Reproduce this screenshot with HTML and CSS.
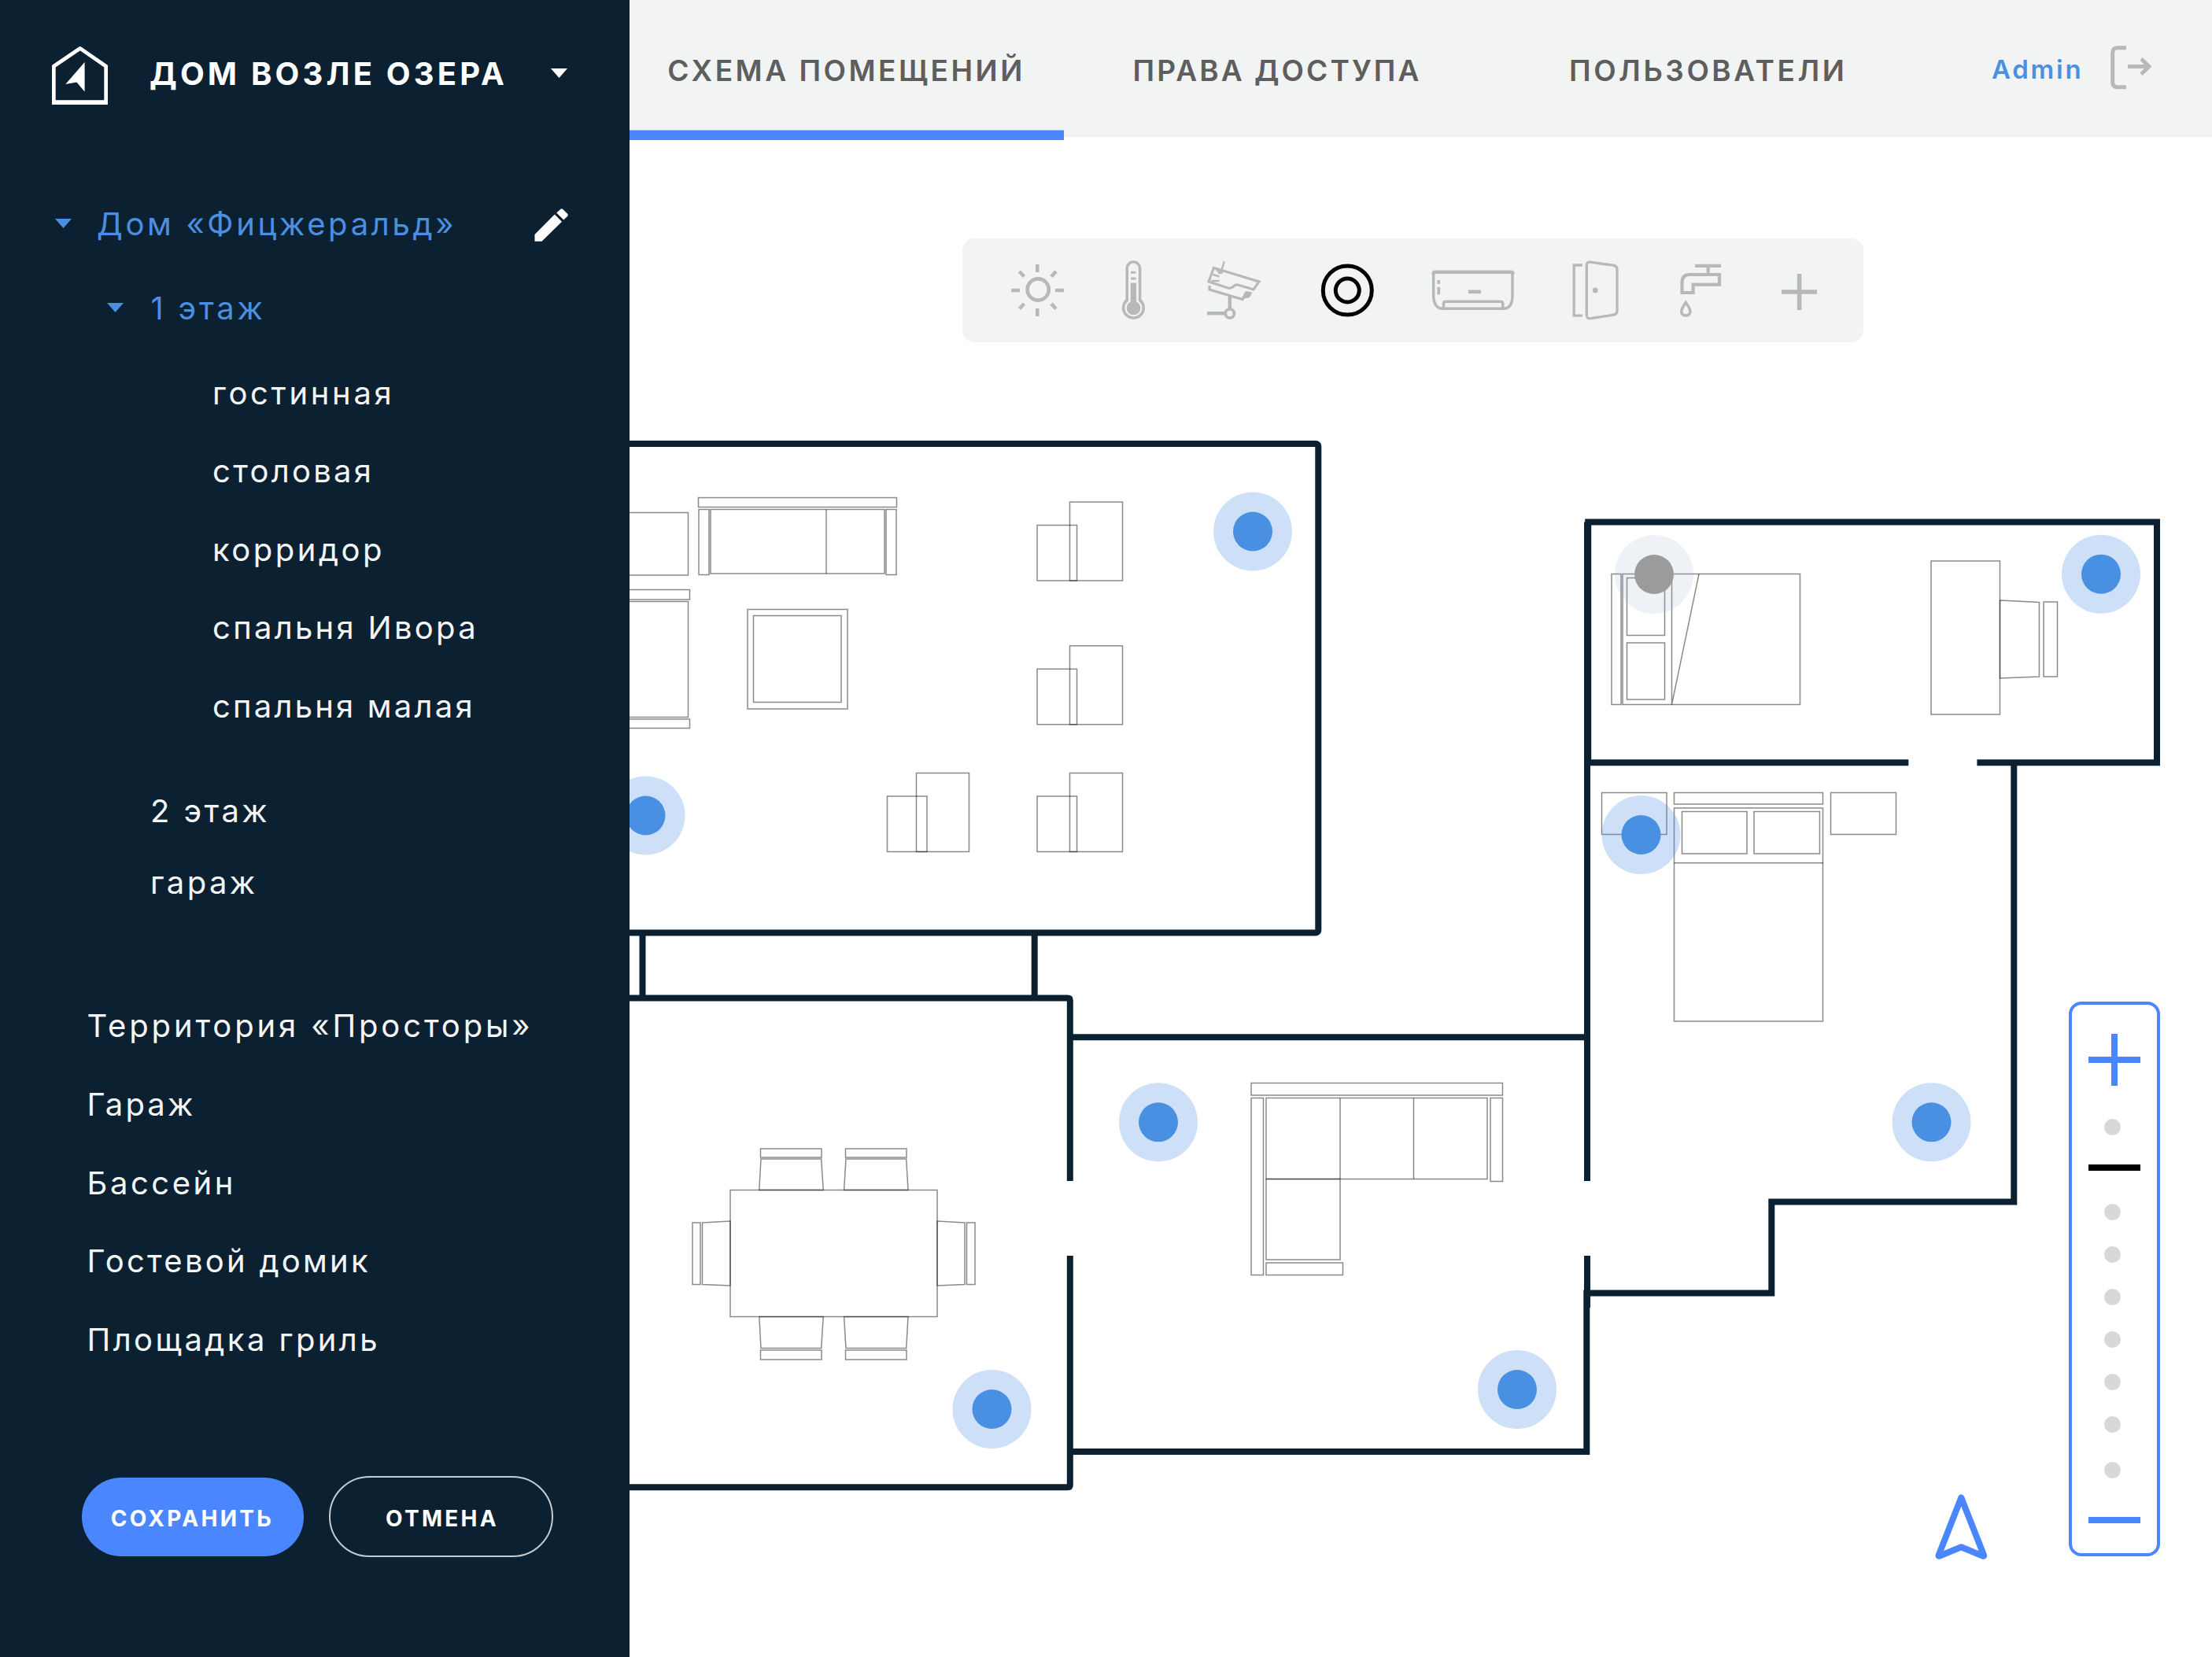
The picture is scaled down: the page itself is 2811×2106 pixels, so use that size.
FILE: index.html
```html
<!DOCTYPE html>
<html lang="ru">
<head>
<meta charset="utf-8">
<title>Дом возле озера</title>
<link rel="stylesheet" href="styles.css">
</head>
<body>
<div class="app">
  <aside class="sidebar">
    <div class="brand">
      <svg class="brand-logo" viewBox="66 0 71 186">
        <path d="M68.3 84.2 101.7 61.4 134.7 84.2V130H68.3Z" fill="none" stroke="#fff" stroke-width="4.8" stroke-linejoin="round"/>
        <path d="M66 127.5H137V133H66Z" fill="#fff"/>
        <path d="M107.6 79V116.5L97.4 104.5 83.3 107Z" fill="#fff"/>
      </svg>
      <span class="brand-name">ДОМ ВОЗЛЕ ОЗЕРА</span>
      <svg class="caret" viewBox="0 0 21 12"><path d="M0 0H21L10.5 12Z"/></svg>
    </div>

    <nav class="tree">
      <div class="row house">
        <svg class="caret" viewBox="0 0 21 12"><path d="M0 0H21L10.5 12Z"/></svg>
        <span>Дом «Фицжеральд»</span>
        <svg class="pencil" viewBox="679 265 43 42"><path d="M679.5 298V306.800H688.500L714 281.800 704.800 272.600ZM707.200 270.400 712.500 265.700Q714 264.800 715.300 266L721.200 271.800Q722.400 273.300 721.200 274.800L716.300 279.600Z"/></svg>
      </div>
      <div class="row floor">
        <svg class="caret" viewBox="0 0 21 12"><path d="M0 0H21L10.5 12Z"/></svg>
        <span>1 этаж</span>
      </div>
      <ul class="rooms">
        <li>гостинная</li>
        <li>столовая</li>
        <li>корридор</li>
        <li>спальня Ивора</li>
        <li>спальня малая</li>
      </ul>
      <ul class="floors">
        <li>2 этаж</li>
        <li>гараж</li>
      </ul>
      <ul class="areas">
        <li>Территория «Просторы»</li>
        <li>Гараж</li>
        <li>Бассейн</li>
        <li>Гостевой домик</li>
        <li>Площадка гриль</li>
      </ul>
    </nav>

    <div class="actions">
      <button class="btn btn-save">СОХРАНИТЬ</button>
      <button class="btn btn-cancel">ОТМЕНА</button>
    </div>
  </aside>

  <main class="main">
    <header class="topbar">
      <a class="tab tab-plan">СХЕМА ПОМЕЩЕНИЙ</a>
      <a class="tab tab-rights">ПРАВА ДОСТУПА</a>
      <a class="tab tab-users">ПОЛЬЗОВАТЕЛИ</a>
      <span class="user">Admin</span>
      <svg class="logout" viewBox="2682 58 52 56" fill="none" stroke="#b8b8b8">
        <path d="M2702 60.7H2691Q2684.7 60.7 2684.7 67V104.5Q2684.7 110.8 2691 110.8H2702" stroke-width="5"/>
        <path d="M2704 84.5H2731M2721 74.8 2731 84.5 2721 94.2" stroke-width="4.8"/>
      </svg>
    </header>

    <section class="canvas">
      <svg class="plan" viewBox="800 174 2011 1932" fill="none">
        <g class="furniture">
          <!-- living room -->
          <path d="M790 651.5H874.5V731H790"/>
          <rect x="887.5" y="632.5" width="252" height="12"/>
          <rect x="888" y="647.5" width="13" height="83"/>
          <rect x="903" y="647.5" width="221" height="81.5"/>
          <path d="M1050 647.5V729"/>
          <rect x="1126" y="647.5" width="13" height="83"/>
          <path d="M790 749.5H876.5V762H790M790 764.5H874.5V911.5H790M790 914H876.5V925.5H790"/>
          <rect x="950" y="774.5" width="127" height="126.5"/>
          <rect x="957.5" y="782.5" width="111.5" height="110"/>
          <rect x="1359.5" y="638" width="67" height="100"/><rect x="1318" y="667.5" width="50.5" height="70.5"/>
          <rect x="1359.5" y="820.8" width="67" height="100"/><rect x="1318" y="850.3" width="50.5" height="70.5"/>
          <rect x="1359.5" y="982.5" width="67" height="100"/><rect x="1318" y="1012" width="50.5" height="70.5"/>
          <rect x="1164.5" y="982.5" width="67" height="100"/><rect x="1127.5" y="1012" width="50.5" height="70.5"/>
          <!-- small bedroom -->
          <rect x="2048" y="729.5" width="12" height="166"/>
          <rect x="2062" y="729.5" width="225.5" height="166"/>
          <rect x="2067.5" y="734.5" width="48" height="73"/>
          <rect x="2067.5" y="817" width="48" height="72"/>
          <path d="M2124.5 729.5V895.5L2159 729.5"/>
          <rect x="2454" y="713" width="87.500" height="195"/>
          <path d="M2541.5 763 2591.5 765.500V860L2541.5 862Z"/>
          <rect x="2597" y="765" width="17.500" height="95"/>
          <!-- main bedroom -->
          <rect x="2035.5" y="1007.5" width="82.5" height="53"/>
          <rect x="2127.5" y="1007.5" width="189" height="14.5"/>
          <rect x="2127.5" y="1027" width="189" height="271"/>
          <rect x="2137.5" y="1031.5" width="82.5" height="53.5"/>
          <rect x="2229" y="1031.5" width="83.5" height="53.5"/>
          <path d="M2127.5 1096.8H2317"/>
          <rect x="2326.5" y="1007.5" width="83" height="53"/>
          <!-- dining room -->
          <rect x="928" y="1512.5" width="263" height="161"/>
          <rect x="966.5" y="1460" width="77.5" height="11"/><path d="M967 1473H1043.7L1046.2 1512.5H964.8Z"/>
          <rect x="1074.5" y="1460" width="77.5" height="11"/><path d="M1075 1473H1151.7L1154 1512.5H1072.6Z"/>
          <rect x="966.5" y="1716" width="77.5" height="12"/><path d="M967 1713.5H1043.7L1046.2 1673.5H964.8Z"/>
          <rect x="1074.5" y="1716" width="77.5" height="12"/><path d="M1075 1713.5H1151.7L1154 1673.5H1072.6Z"/>
          <rect x="880" y="1554" width="10" height="78.5"/><path d="M892.5 1554 928 1552V1634L892.5 1632.5Z"/>
          <rect x="1228.5" y="1554" width="10.5" height="78.5"/><path d="M1226 1554 1191 1552V1634L1226 1632.5Z"/>
          <!-- hall -->
          <rect x="1590" y="1376.5" width="319.5" height="15.5"/>
          <rect x="1590" y="1395.5" width="15.5" height="225"/>
          <rect x="1609" y="1395.5" width="281" height="103"/>
          <path d="M1703 1395.5V1498.5M1796.5 1395.5V1498.5"/>
          <rect x="1894" y="1395.5" width="15.5" height="106"/>
          <rect x="1609" y="1498.5" width="94" height="102.5"/>
          <rect x="1609" y="1605" width="97.5" height="15.5"/>
        </g>

        <g class="walls">
          <rect x="700" y="564" width="975.3" height="621.4" rx="3"/>
          <path d="M816.5 1185V1268M1314.7 1185V1268"/>
          <path d="M790 1268.6H1356.8Q1359.8 1268.6 1359.8 1271.6V1501M1359.8 1596V1887.3Q1359.8 1890.3 1356.8 1890.3H790"/>
          <path d="M1360 1318.2H2017"/>
          <path d="M2017 1596V1662"/>
          <path d="M1360 1845H2016.3V1643.6H2251.3V1527.5H2559.3V970"/>
          <path d="M2017 1501V663.5"/>
          <path d="M2425.3 969.2H2018.2V663.5H2741V969.2H2512.4"/>
        </g>

        <g class="halo">
          <circle cx="1592" cy="675.5" r="50"/><circle cx="820.5" cy="1036.500" r="50"/>
          <circle cx="2670" cy="729.700" r="50"/><circle cx="2085.500" cy="1061" r="50"/>
          <circle cx="2454.5" cy="1426.300" r="50"/><circle cx="1472" cy="1426.300" r="50"/>
          <circle cx="1928" cy="1766" r="50"/><circle cx="1260.5" cy="1791" r="50"/>
          <circle class="halo-off" cx="2102" cy="730" r="50"/>
        </g>
        <g class="sensor">
          <circle cx="1592" cy="675.500" r="25"/><circle cx="820.5" cy="1036.500" r="25"/>
          <circle cx="2670" cy="729.700" r="25"/><circle cx="2085.500" cy="1061" r="25"/>
          <circle cx="2454.5" cy="1426.300" r="25"/><circle cx="1472" cy="1426.300" r="25"/>
          <circle cx="1928" cy="1766" r="25"/><circle cx="1260.5" cy="1791" r="25"/>
          <circle class="sensor-off" cx="2102" cy="730" r="25"/>
        </g>
      </svg>

      <div class="toolbar">
        <svg class="tool tool-light" viewBox="1223 303 166 132" stroke-width="4.6">
          <circle cx="1319.2" cy="368" r="13.6"/>
          <path d="M1318.3 336V346M1318.3 392V402M1285.3 369H1296M1341 369H1352M1295.5 345 1301.5 351.5M1342 345 1336 351.5M1295.5 392.5 1301.5 386M1342 392.5 1336 386"/>
        </svg>
        <svg class="tool tool-heat" viewBox="1389 303 106 132" stroke-width="3.6">
          <path d="M1432.2 381.5V341A8.2 8.2 0 0 1 1448.600 341V381.5A12.8 12.8 0 1 1 1432.2 381.5Z"/>
          <path d="M1440.400 359.500V390" stroke-width="7.4"/>
          <circle cx="1440.500" cy="391.500" r="8.800" fill="#b8b8b8" stroke="none"/>
          <path d="M1437 346.300H1443.500M1437 354H1443.500" stroke-width="3"/>
        </svg>
        <svg class="tool tool-camera" viewBox="1495 303 145 132" stroke-width="3.2">
          <path d="M1542.500 340.500 1600 358 1593 368 1573 362Q1570 361.300 1567.500 364 1564.500 367 1560.500 366L1536 358Z"/>
          <path d="M1555.800 332.300 1552.500 343M1545.500 343.500 1553.500 346.500 1548 347M1541.500 349 1549.500 351.500M1539.500 357H1549.500" stroke-width="2.4"/>
          <path d="M1537 363V368L1579 380.500 1583.500 371.500"/>
          <path d="M1583 370 1591.500 371.500 1588 378 1580 380Z" fill="#b8b8b8" stroke="none"/>
          <path d="M1562.800 377V392M1534 398.300H1556" stroke-width="4.400"/>
          <circle cx="1562.800" cy="398.500" r="5.600" stroke-width="3.800"/>
        </svg>
        <svg class="tool tool-sensor tool-active" viewBox="1640 303 143 132" stroke-width="5">
          <circle cx="1712.300" cy="369" r="31"/><circle cx="1712.300" cy="369" r="15"/>
        </svg>
        <svg class="tool tool-climate" viewBox="1783 303 178 132" stroke-width="3.500">
          <path d="M1821.700 346V377Q1822.500 392.300 1834 392.300H1910Q1921.500 392.300 1922 377V346"/>
          <path d="M1821.500 348.500Q1821.500 345.800 1824 345.800H1920Q1922.500 345.800 1922.500 348.500" stroke-width="4.600"/>
          <path d="M1834.500 392V386Q1834.500 383.300 1837 383.300H1907Q1909.700 383.300 1909.700 386V392"/>
          <path d="M1866 370.800H1882" stroke-width="4.600"/>
          <path d="M1828.300 356V361M1828.300 364.700V374.300" stroke-width="3.600"/>
        </svg>
        <svg class="tool tool-door" viewBox="1961 303 135 132" stroke-width="3.300">
          <path d="M2011 337H2000.200V401.200H2011"/>
          <path d="M2016.300 337Q2016.300 332.600 2021 333.200L2050 337.200Q2055 338 2055 343V395Q2055 399.300 2050.500 400.200L2021.500 404.700Q2016.300 405.400 2016.300 400.500Z"/>
          <circle cx="2027.200" cy="369" r="3.500" fill="#b8b8b8" stroke="none"/>
        </svg>
        <svg class="tool tool-water" viewBox="2096 303 130 132" stroke-width="4.200">
          <path d="M2154 337.800H2187M2170.700 338V348"/>
          <path d="M2185 349V361.700H2151.600V372H2137.500V359Q2137.500 349 2147 349Z"/>
          <path d="M2142.300 384.500Q2136.800 392 2136.800 396A5.500 5 0 0 0 2147.900 396Q2147.900 392 2142.300 384.500Z" stroke-width="3.600"/>
        </svg>
        <svg class="tool tool-add" viewBox="2226 303 142 132" stroke-width="5.600">
          <path d="M2264 371H2309M2286.600 348V394"/>
        </svg>
      </div>

      <svg class="compass" viewBox="2458 1898 68 86">
        <path d="M2492.300 1903.500 2521 1976.500Q2521.500 1978.300 2519.500 1977.500L2492.300 1966.300 2465 1977.500Q2463 1978.300 2463.700 1976.500Z"/>
      </svg>

      <div class="zoom">
        <svg class="zoom-in" viewBox="0 0 66 66"><path d="M0 33H66M33 0V66"/></svg>
        <i class="dot"></i>
        <i class="level"></i>
        <i class="dot"></i>
        <i class="dot"></i>
        <i class="dot"></i>
        <i class="dot"></i>
        <i class="dot"></i>
        <i class="dot"></i>
        <i class="dot dot-last"></i>
        <i class="zoom-out"></i>
      </div>
    </section>
  </main>
</div>
</body>
</html>
```
FILE: styles.css
```css
* { box-sizing: border-box; }
body { margin: 0; background: #fff; font-family: Inter, "Noto Sans", sans-serif; }
ul { list-style: none; margin: 0; padding: 0; }
svg { display: block; flex: none; }

.app { display: grid; grid-template-columns: 800px 2011px; width: 2811px; height: 2106px; overflow: hidden; }

/* sidebar */
.sidebar { position: relative; z-index: 2; background: #0b2030; color: #f4f5f6; font-size: 40px; white-space: nowrap; }
.brand { display: flex; align-items: center; height: 186px; padding: 0 79px 0 66px; color: #fff; }
.brand-logo { width: 71px; height: 186px; }
.brand-name { margin-left: 53px; font-weight: 700; letter-spacing: 4.16px; }
.caret { width: 21px; height: 12px; fill: currentColor; }
.brand .caret { margin-left: auto; }

.row, .rooms li, .areas li { height: 99.6px; line-height: 99.6px; }
.row { display: flex; align-items: center; color: #4a8fe0; }
.house { margin-top: 48px; padding: 0 78px 0 70px; letter-spacing: 3.65px; }
.house span { margin-left: 32px; padding-top: 1px; }
.pencil { width: 43px; height: 42px; margin: 4px 0 0 auto; fill: #fff; }
.floor { margin-top: 8px; padding-left: 136px; letter-spacing: 3.75px; }
.floor span { margin-left: 34.5px; }

.rooms { margin-top: 8.5px; padding-left: 270px; letter-spacing: 3.28px; }
.rooms li:nth-child(1) { letter-spacing: 3.65px; }
.rooms li:nth-child(3) { letter-spacing: 3.5px; }
.rooms li:nth-child(5) { letter-spacing: 3.2px; }
.floors { margin-top: 37.3px; padding-left: 191px; letter-spacing: 3.4px; }
.floors li { height: 91px; line-height: 91px; }
.areas { margin-top: 87.5px; padding-left: 110.5px; letter-spacing: 3.4px; }
.areas li:nth-child(1) { letter-spacing: 3.87px; }
.areas li:nth-child(2) { letter-spacing: 3.1px; }
.areas li:nth-child(3) { letter-spacing: 3.55px; }
.areas li:nth-child(4) { letter-spacing: 3.25px; }

.actions { display: flex; align-items: center; gap: 32px; margin-top: 124px; padding-left: 103.5px; }
.btn { padding: 4px 0 0; border: 0; color: #fff; font: 700 28px/34px Inter, "Noto Sans", sans-serif; letter-spacing: 3.3px; }
.btn-save { width: 282px; height: 100px; border-radius: 50px; background: #4a87ff; }
.btn-cancel { width: 285px; height: 103px; padding-left: 4px; border: 2px solid #c6cbcf; border-radius: 52px; background: none; }

/* header */
.main { display: grid; grid-template-rows: 174px 1932px; }
.topbar { position: relative; z-index: 1; display: flex; align-items: center; background: #f2f4f3; white-space: nowrap; }
.tab { align-self: flex-start; height: 178px; padding-top: 1px; line-height: 178px; color: #5e5e5e; font-size: 37px; font-weight: 600; }
.tab-plan { width: 552px; padding-left: 48.2px; letter-spacing: 3.5px; box-shadow: inset 0 -12.5px #4a87ff; }
.tab-rights { width: 552px; padding-left: 87.6px; letter-spacing: 3.06px; }
.tab-users { width: 627px; padding-left: 90px; letter-spacing: 3.55px; }
.user { width: 150.5px; padding-top: 1px; color: #4a90e2; font-size: 33px; font-weight: 600; letter-spacing: 2.76px; }
.logout { width: 52px; height: 56px; margin-top: -2px; }

/* floor plan */
.canvas { position: relative; }
.plan { width: 2011px; height: 1932px; }
.furniture { stroke: #000; stroke-opacity: .46; stroke-width: 1.5; }
.walls { stroke: #0b2030; stroke-width: 8; }
.halo { fill: #4a90e2; fill-opacity: .28; }
.halo-off { fill: #9bafcd; fill-opacity: .17; }
.sensor { fill: #4a90e2; }
.sensor-off { fill: #9b9b9b; }

.toolbar { position: absolute; left: 423px; top: 129px; display: flex; width: 1145px; height: 132px; border-radius: 15px; background: #f2f4f3; }
.tool { height: 132px; fill: none; stroke: #b8b8b8; }
.tool-light { width: 166px; }
.tool-heat { width: 106px; }
.tool-camera { width: 145px; }
.tool-sensor { width: 143px; }
.tool-climate { width: 178px; }
.tool-door { width: 135px; }
.tool-water { width: 130px; }
.tool-add { width: 142px; }
.tool-active { stroke: #000; }

.compass { position: absolute; left: 1658px; top: 1724px; width: 68px; height: 86px; fill: none; stroke: #4a87ff; stroke-width: 8; stroke-linejoin: round; }

.zoom { position: absolute; left: 1829px; top: 1099px; display: flex; flex-direction: column; align-items: center; width: 116px; height: 705px; padding-top: 37px; border: 4px solid #4a87ff; border-radius: 16px; }
.zoom-in { width: 66px; height: 66px; margin-bottom: 42px; fill: none; stroke: #4a87ff; stroke-width: 8; }
.dot { width: 21px; height: 21px; margin: 0 5px 33px 0; border-radius: 50%; background: #d8d8d8; }
.level { width: 66px; height: 8px; margin: 4px 0 42px; background: #000; }
.dot-last { margin-top: 4px; margin-bottom: 49px; }
.zoom-out { width: 66px; height: 8px; background: #4a87ff; }
```
